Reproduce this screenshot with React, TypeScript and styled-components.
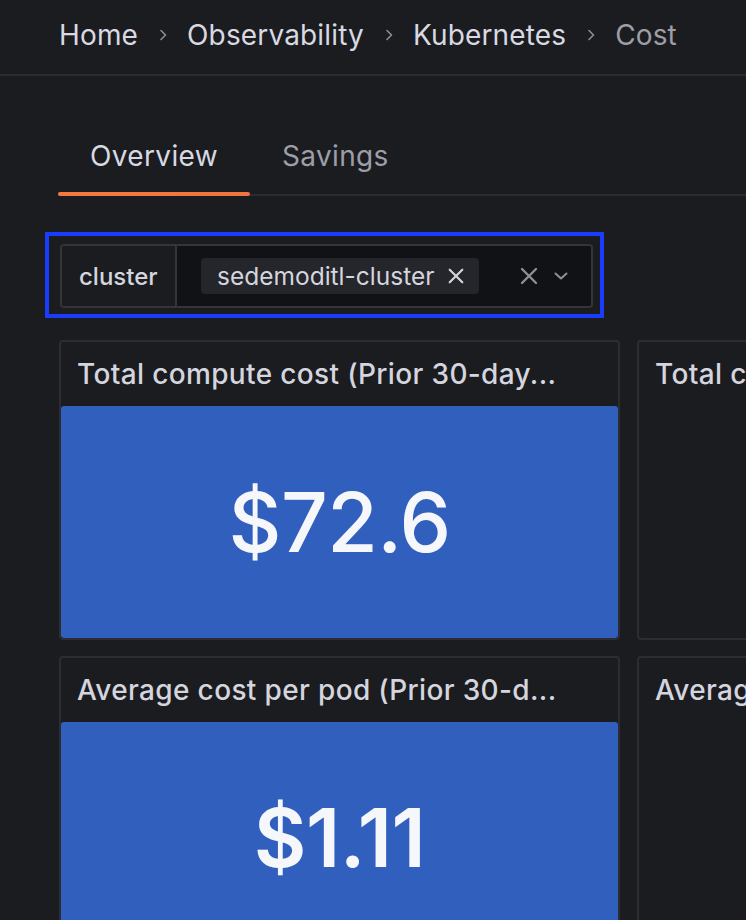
import * as React from "react";
import styled, { createGlobalStyle } from "styled-components";

const GlobalStyle = createGlobalStyle`
    html, body {
        margin: 0;
        padding: 0;
        background: #1b1c20;
        overflow: hidden;
    }
    body {
        font-family: Inter, "Noto Sans", sans-serif;
        color: #d4d5de;
    }
`;

const Page = styled.div`
    width: 746px;
    height: 920px;
    overflow: hidden;
    background: #1b1c20;
`;

const TopBar = styled.div`
    display: flex;
    align-items: center;
    height: 76px;
    padding-left: 59px;
    padding-bottom: 4px;
    border-bottom: 2px solid #2b2c31;
    box-sizing: border-box;
`;

const Crumb = styled.span<{ $current?: boolean }>`
    font-size: 28px;
    font-weight: 400;
    letter-spacing: 0.15px;
    color: ${(p) => (p.$current ? "#9d9ea7" : "#d8d9e2")};
    white-space: nowrap;
`;

const Sep = styled.span`
    display: flex;
    align-items: center;
    margin: 0 18px 0 19px;
    color: #8c8d95;
`;

const Content = styled.div`
    padding: 0 0 0 58px;
`;

const TabRow = styled.div`
    display: flex;
    margin-top: 58px;
    border-bottom: 2px solid #2b2c31;
    height: 62px;
    box-sizing: border-box;
`;

const Tab = styled.div<{ $active?: boolean }>`
    position: relative;
    padding: 0 32px;
    font-size: 28px;
    font-weight: 400;
    letter-spacing: 0.35px;
    color: ${(p) => (p.$active ? "#d8d9e2" : "#9d9ea7")};
    line-height: 40px;
    margin-top: 2px;

    &::after {
        content: "";
        display: ${(p) => (p.$active ? "block" : "none")};
        position: absolute;
        left: 0;
        right: 0;
        bottom: -2px;
        height: 4px;
        border-radius: 2px;
        background: linear-gradient(90deg, #f27a40, #f0743d);
    }
`;

const FilterFocus = styled.div`
    display: inline-flex;
    margin: 36px 0 0 -13px;
    padding: 8px 7px 6px 11px;
    border: 4px solid #1a3dfd;
`;

const FilterControl = styled.div`
    display: flex;
    width: 533px;
    height: 64px;
    border: 2px solid #34353b;
    border-radius: 4px;
    box-sizing: border-box;
    overflow: hidden;
`;

const FilterLabel = styled.div`
    display: flex;
    align-items: center;
    padding: 0 16px 0 17px;
    width: 115px;
    box-sizing: border-box;
    font-size: 24px;
    font-weight: 500;
    color: #d4d5de;
    background: #1b1c20;
    border-right: 2px solid #34353b;
`;

const FilterInput = styled.div`
    flex: 1;
    display: flex;
    align-items: center;
    padding-left: 24px;
    padding-right: 22px;
    background: #111216;
`;

const Chip = styled.div`
    display: flex;
    align-items: center;
    gap: 13px;
    height: 36px;
    padding: 0 14px 0 16px;
    border-radius: 4px;
    background: #25262b;
    font-size: 24.5px;
    color: #d4d5de;
`;

const Controls = styled.div`
    display: flex;
    align-items: center;
    gap: 14px;
    margin-left: auto;
    color: #8e8f97;
`;

const Grid = styled.div`
    display: grid;
    grid-template-columns: 561px 561px;
    column-gap: 17px;
    row-gap: 16px;
    margin-top: 22px;
    margin-left: 1px;
`;

const Panel = styled.div`
    height: 300px;
    border: 2px solid #2c2d33;
    border-radius: 4px;
    box-sizing: border-box;
    display: flex;
    flex-direction: column;
    overflow: hidden;
`;

const PanelTitle = styled.div`
    height: 64px;
    flex-shrink: 0;
    display: flex;
    align-items: center;
    padding: 0 16px;
    font-size: 28px;
    font-weight: 500;
    letter-spacing: 0.35px;
    color: #d4d5de;
    white-space: nowrap;
`;

const StatBody = styled.div<{ $filled?: boolean }>`
    flex: 1;
    display: flex;
    align-items: center;
    justify-content: center;
    background: ${(p) => (p.$filled ? "#315fbe" : "transparent")};
    border-radius: 3px;
`;

const StatValue = styled.div<{ $size: number; $weight: number }>`
    font-size: ${(p) => p.$size}px;
    font-weight: ${(p) => p.$weight};
    color: #f6f7fa;
    letter-spacing: -0.5px;
`;

const ChevronRight = () => (
    <svg width="12" height="14" viewBox="0 0 12 14" fill="none">
        <path d="M4 2.5 L8.5 7 L4 11.5" stroke="currentColor" strokeWidth="1.6" strokeLinecap="round" strokeLinejoin="round" />
    </svg>
);

const Cross = ({ size, stroke }: { size: number; stroke: number }) => (
    <svg width={size} height={size} viewBox="0 0 20 20" fill="none">
        <path d="M3 3 L17 17 M17 3 L3 17" stroke="currentColor" strokeWidth={stroke} strokeLinecap="round" />
    </svg>
);

const ChevronDown = () => (
    <svg width="16" height="16" viewBox="0 0 16 16" fill="none">
        <path d="M2.5 5.5 L8 10.5 L13.5 5.5" stroke="currentColor" strokeWidth="2" strokeLinecap="round" strokeLinejoin="round" />
    </svg>
);

const crumbs = ["Home", "Observability", "Kubernetes", "Cost"];

const panels = [
    { title: "Total compute cost (Prior 30-day...", value: "$72.6", size: 82, weight: 500, filled: true },
    { title: "Total compute cost (Prior 30-day...", value: "", size: 82, weight: 500, filled: false },
    { title: "Average cost per pod (Prior 30-d...", value: "$1.11", size: 81, weight: 600, filled: true },
    { title: "Average cost per pod (Prior 30-d...", value: "", size: 81, weight: 600, filled: false },
];

const App: React.FunctionComponent = (): JSX.Element => {
    return (
        <>
            <GlobalStyle />
            <Page>
                <TopBar>
                    {crumbs.map((c, i) => (
                        <React.Fragment key={c}>
                            {i > 0 && (
                                <Sep>
                                    <ChevronRight />
                                </Sep>
                            )}
                            <Crumb $current={i === crumbs.length - 1}>{c}</Crumb>
                        </React.Fragment>
                    ))}
                </TopBar>
                <Content>
                    <TabRow>
                        <Tab $active>Overview</Tab>
                        <Tab>Savings</Tab>
                    </TabRow>
                    <FilterFocus>
                        <FilterControl>
                            <FilterLabel>cluster</FilterLabel>
                            <FilterInput>
                                <Chip>
                                    sedemoditl-cluster
                                    <Cross size={18} stroke={2.4} />
                                </Chip>
                                <Controls>
                                    <Cross size={20} stroke={2.4} />
                                    <ChevronDown />
                                </Controls>
                            </FilterInput>
                        </FilterControl>
                    </FilterFocus>
                    <Grid>
                        {panels.map((p, i) => (
                            <Panel key={i}>
                                <PanelTitle>{p.title}</PanelTitle>
                                <StatBody $filled={p.filled}>
                                    {p.value && (
                                        <StatValue $size={p.size} $weight={p.weight}>
                                            {p.value}
                                        </StatValue>
                                    )}
                                </StatBody>
                            </Panel>
                        ))}
                    </Grid>
                </Content>
            </Page>
        </>
    );
};

export default App;
